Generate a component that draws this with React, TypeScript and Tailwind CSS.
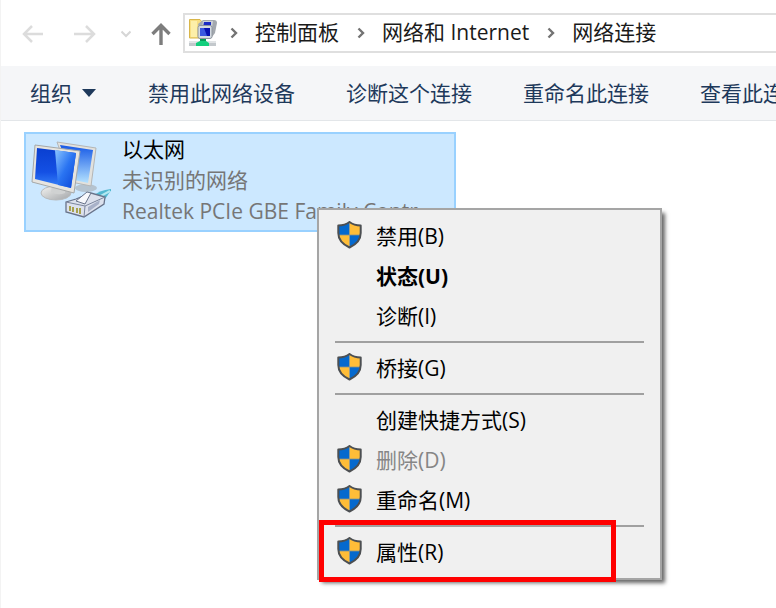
import type { ReactNode } from "react"

const commands = ["禁用此网络设备", "诊断这个连接", "重命名此连接", "查看此连接的状态"]

const crumbs = ["控制面板", "网络和 Internet", "网络连接"]

type Item = { label: string; shield?: boolean; bold?: boolean; disabled?: boolean }

const groups: Item[][] = [
  [{ label: "禁用(B)", shield: true }, { label: "状态(U)", bold: true }, { label: "诊断(I)" }],
  [{ label: "桥接(G)", shield: true }],
  [
    { label: "创建快捷方式(S)" },
    { label: "删除(D)", shield: true, disabled: true },
    { label: "重命名(M)", shield: true },
  ],
  [{ label: "属性(R)", shield: true }],
]

function Shield() {
  const outline = "M12.5 1C9.5 3.2 5.5 4.4 1.3 4.5V12C1.3 18.5 6 23.5 12.5 26.5C19 23.5 23.7 18.5 23.7 12V4.5C19.5 4.4 15.5 3.2 12.5 1Z"
  return (
    <svg className="h-7 w-[25px]" viewBox="0 0 25 28" aria-hidden="true">
      <clipPath id="shield">
        <path d={outline} />
      </clipPath>
      <g clipPath="url(#shield)">
        <path d="M0 0H12.5V14H0Z M12.5 14H25V28H12.5Z" fill="#0569ce" />
        <path d="M12.5 0H25V14H12.5Z M0 14H12.5V28H0Z" fill="#ffbd38" />
        <path d="M12.5 0V28M0 14H25" stroke="#8c9388" strokeWidth="0.8" />
      </g>
      <path d={outline} fill="none" stroke="#4c4f52" strokeWidth="2" strokeLinejoin="round" />
    </svg>
  )
}

function NavButton({ label, children }: { label: string; children: ReactNode }) {
  return (
    <button type="button" aria-label={label} className="flex shrink-0 items-center">
      {children}
    </button>
  )
}

function ChevronRight() {
  return (
    <svg className="h-3 w-2 shrink-0" viewBox="0 0 8 12" fill="none" stroke="#737373" strokeWidth="2.4" aria-hidden="true">
      <path d="M1.5 1.5L6 6L1.5 10.5" />
    </svg>
  )
}

function FolderIcon() {
  return (
    <svg className="h-7 w-7 shrink-0" viewBox="0 0 28 28" aria-hidden="true">
      <path d="M0.500 0.500H11L13 3V19H0.500Z" fill="#f8df83" stroke="#d9b64a" />
      <path d="M2 2H8V18H2Z" fill="#fdefa9" />
      <path d="M14 1H25Q28 1 28 4L26 14L23 18H13L9 5Z" fill="#a3a8ae" />
      <path d="M14 2H24L23 9H13Z" fill="#ccd1d7" />
      <path d="M15 3H22V8H14Z" fill="#1b2bc4" />
      <rect x="9" y="6.500" width="14" height="13" rx="2" fill="#d5dbe2" stroke="#8f969e" />
      <path d="M11 9H21V17H11Z" fill="#0712b0" />
      <path d="M11 9H15L18 17H11Z" fill="#3a58e0" />
      <path d="M0 22H27V27H0Z" fill="#c3c8cc" />
      <path d="M0 22H27V24H0Z" fill="#e1e4e6" />
      <path d="M11 20H17V22L20 24V27H7V24L11 22Z" fill="#13cf7d" />
      <path d="M11 20H17V22H11Z" fill="#079b58" />
    </svg>
  )
}

function EthernetIcon() {
  return (
    <svg className="h-20 w-20 shrink-0" viewBox="0 0 80 80" aria-hidden="true">
      <defs>
        <linearGradient id="screen" x1="0" y1="0" x2="0" y2="1">
          <stop offset="0" stopColor="#0a3fd0" />
          <stop offset="0.6" stopColor="#1450e4" />
          <stop offset="1" stopColor="#3a86fa" />
        </linearGradient>
        <linearGradient id="shine" x1="0" y1="0" x2="1" y2="1">
          <stop offset="0" stopColor="#8cc6ff" />
          <stop offset="0.5" stopColor="#2a74f2" />
          <stop offset="1" stopColor="#0a44d6" />
        </linearGradient>
        <linearGradient id="screenBack" x1="0" y1="0" x2="0" y2="1">
          <stop offset="0" stopColor="#1558e6" />
          <stop offset="1" stopColor="#b4e2ff" />
        </linearGradient>
        <linearGradient id="stand" x1="0" y1="0" x2="1" y2="1">
          <stop offset="0" stopColor="#f4f4f2" />
          <stop offset="1" stopColor="#a2a5a8" />
        </linearGradient>
      </defs>
      {/* rear monitor */}
      <ellipse cx="55" cy="47" rx="11" ry="4" fill="#b5c3cf" />
      <path d="M26 1L65 7L60 45L40 41Z" fill="#e2e1dd" stroke="#b4b6b6" />
      <path d="M29 4L62 9L57 42L43 39Z" fill="url(#screenBack)" />
      {/* front monitor */}
      <ellipse cx="25" cy="52" rx="15" ry="7" fill="url(#stand)" stroke="#b8babb" />
      <path d="M21 44L34 48L34 52Q27 55 20 51Z" fill="#d0d2d2" />
      <path d="M4 4L49 10L43 52L1 41Z" fill="#e6e4df" stroke="#a5a8a8" />
      <path d="M6 7L45 12L40 47L4 38Z" fill="url(#screen)" />
      <path d="M24 9L45 12L40 47L27 44Z" fill="url(#shine)" />
      {/* network plug */}
      <path d="M61 56Q68 49 81 48L74 58L64 62Z" fill="#54b8d0" />
      <path d="M66 57L79 50" stroke="#b4e8f1" strokeWidth="2" />
      <path d="M35 61L45 58L60 52L74 56L73 63L53 76L35 71Z" fill="#dce1ed" stroke="#68738a" strokeWidth="1.3" />
      <path d="M35 61L54 65L74 56M54 65L53 76" fill="none" stroke="#7b859c" />
      <path d="M45 60L56 51L60 52L54 63Z" fill="#f7f8fc" stroke="#68738a" />
      <path d="M57 66L69 59L68 63L57 71Z" fill="#a8b1c8" />
      <path d="M39 65V70M42 66V71M46 67V72M49 67V73" stroke="#a8a24e" strokeWidth="2" />
    </svg>
  )
}

function ContextMenu() {
  return (
    <div
      role="menu"
      className="absolute top-[208px] left-[316px] w-[345px] border-2 border-[#a5a5a5] bg-[#f0f0f0] py-[6px] text-black shadow-[4px_4px_4px_-1px_rgba(0,0,0,0.6)]"
    >
      {groups.map((group, i) => (
        <div key={i} role="group" className="relative">
          {i > 0 && (
            <div role="separator" className="px-4 py-[5px]">
              <div className="h-[2px] bg-[#a0a0a0]" />
            </div>
          )}
          {group.map((item) => (
            <button
              key={item.label}
              type="button"
              role="menuitem"
              disabled={item.disabled}
              className={`flex h-10 w-full items-center gap-[14px] pl-[18px] text-left ${item.bold ? "font-bold" : ""} ${item.disabled ? "text-[#868686]" : ""}`}
            >
              <span className="w-[25px] shrink-0 pb-[2px]">{item.shield && <Shield />}</span>
              {item.label}
            </button>
          ))}
          {i === groups.length - 1 && (
            <div className="pointer-events-none absolute top-0 -bottom-[10px] left-0 w-[297px] border-5 border-[#ff0000]" />
          )}
        </div>
      ))}
    </div>
  )
}

export default function App() {
  return (
    <div className="relative min-h-screen overflow-hidden border-l border-[#f3f3f3] bg-white font-['Open_Sans','Noto_Sans_CJK_SC',sans-serif] text-[21px] leading-[31px] whitespace-nowrap text-[#1a1a1a]">
      <header className="flex h-[66px] items-center pl-[21px]">
        <nav className="flex items-center pt-[2px]" aria-label="导航">
          <NavButton label="后退">
            <svg className="h-5 w-[22px]" viewBox="0 0 22 20" fill="none" stroke="#dcdcdc" strokeWidth="2.5">
              <path d="M21 10H2M10 2L2 10L10 18" />
            </svg>
          </NavButton>
          <div className="w-[30px]" />
          <NavButton label="前进">
            <svg className="h-5 w-[22px]" viewBox="0 0 22 20" fill="none" stroke="#dcdcdc" strokeWidth="2.5">
              <path d="M0 10H20M12 2L20 10L12 18" />
            </svg>
          </NavButton>
          <div className="w-[25px]" />
          <NavButton label="最近浏览的位置">
            <svg className="h-2 w-[10px]" viewBox="0 0 10 8" fill="none" stroke="#d6d6d6" strokeWidth="2">
              <path d="M0.500 1.500L5 6L9.500 1.500" />
            </svg>
          </NavButton>
          <div className="w-5" />
          <NavButton label="上移">
            <svg className="h-[22px] w-5" viewBox="0 0 20 22" fill="none" stroke="#7d7d7d" strokeWidth="3.4">
              <path d="M10 22V3M1.500 11L10 2.500L18.500 11" />
            </svg>
          </NavButton>
        </nav>
        <div className="ml-[12px] flex h-10 flex-1 items-center border-2 border-r-0 border-[#dfdfdf] pl-1">
          <FolderIcon />
          <ol className="ml-[13px] flex items-center gap-[18px]">
            {crumbs.map((crumb) => (
              <li key={crumb} className="flex items-center gap-[17px]">
                <ChevronRight />
                <button type="button" className="pb-[2px]">{crumb}</button>
              </li>
            ))}
          </ol>
        </div>
      </header>

      <div role="toolbar" className="flex h-[55px] items-center gap-[51px] overflow-hidden border-b border-[#e3e6e9] bg-[#f5f6f8] pl-[29px] text-[#1e395b]">
        <button type="button" className="flex shrink-0 items-center gap-[9px]">
          组织
          <svg className="h-2 w-4" viewBox="0 0 16 8" fill="#1e395b" aria-hidden="true">
            <path d="M1 0H15L8 8Z" />
          </svg>
        </button>
        {commands.map((command) => (
          <button key={command} type="button" className="shrink-0">
            {command}
          </button>
        ))}
      </div>

      <main className="px-[23px] pt-[11px]">
        <button
          type="button"
          className="flex h-[100px] w-[432px] items-start gap-[11px] overflow-hidden border-2 border-[#99d1ff] bg-[#cce8ff] pl-[5px] text-left"
        >
          <span className="pt-[7px]">
            <EthernetIcon />
          </span>
          <span className="flex flex-col text-[#767676]">
            <span className="text-black">以太网</span>
            <span>未识别的网络</span>
            <span>Realtek PCIe GBE Family Contr...</span>
          </span>
        </button>
      </main>

      <ContextMenu />
    </div>
  )
}
